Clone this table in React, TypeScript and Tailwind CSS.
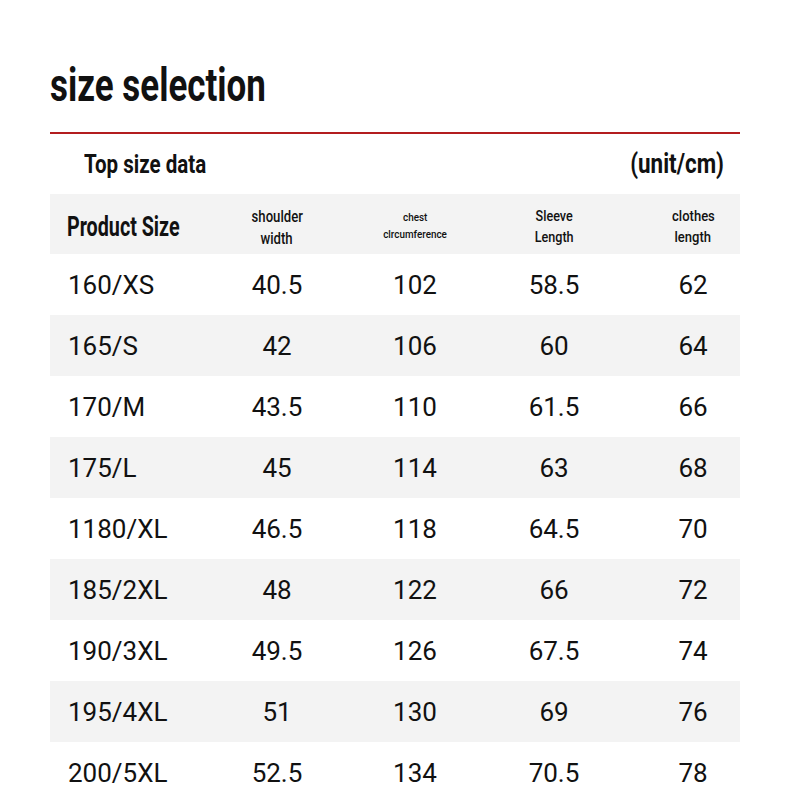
import React from "react";

const rows = [
  ["160/XS", "40.5", "102", "58.5", "62"],
  ["165/S", "42", "106", "60", "64"],
  ["170/M", "43.5", "110", "61.5", "66"],
  ["175/L", "45", "114", "63", "68"],
  ["1180/XL", "46.5", "118", "64.5", "70"],
  ["185/2XL", "48", "122", "66", "72"],
  ["190/3XL", "49.5", "126", "67.5", "74"],
  ["195/4XL", "51", "130", "69", "76"],
  ["200/5XL", "52.5", "134", "70.5", "78"],
];

const grid = "grid grid-cols-[158px_138px_138px_140px_116px]";

export default function App() {
  return (
    <div
      className="w-[790px] h-[799px] overflow-hidden bg-white text-[#111]"
      style={{ fontFamily: "Roboto, 'Liberation Sans', sans-serif" }}
    >
      <div className="px-[50px]">
        <div className="h-[132px] flex items-center pt-[38px]">
          <span className="inline-block origin-left scale-x-[0.76] text-[46px] font-bold leading-none whitespace-nowrap">
            size selection
          </span>
        </div>
        <div className="h-[2px] bg-[#b31d1f]" />
        <div className="h-[60px] flex items-center justify-between pl-[34px] pr-[16px]">
          <span className="inline-block origin-left scale-x-[0.79] text-[26px] font-bold leading-none whitespace-nowrap">
            Top size data
          </span>
          <span className="inline-block origin-right scale-x-[0.83] text-[27px] font-bold leading-none whitespace-nowrap">
            (unit/cm)
          </span>
        </div>
        <div className={`${grid} h-[60px] bg-[#f3f3f3] items-center`}>
          <div className="pl-[17px] pt-[8px]">
            <span className="inline-block origin-left scale-x-[0.73] text-[27px] font-bold leading-none whitespace-nowrap">
              Product Size
            </span>
          </div>
          <div className="flex flex-col items-center text-[16px] font-medium leading-[22px] pt-[8px]">
            <span className="inline-block scale-x-[0.82] whitespace-nowrap">shoulder</span>
            <span className="inline-block scale-x-[0.82] whitespace-nowrap">width</span>
          </div>
          <div className="flex flex-col items-center text-[11.5px] font-medium leading-[17px] pt-[4px]">
            <span className="inline-block scale-x-[0.86] whitespace-nowrap">chest</span>
            <span className="inline-block scale-x-[0.86] whitespace-nowrap">clrcumference</span>
          </div>
          <div className="flex flex-col items-center text-[15px] font-medium leading-[21px] pt-[6px]">
            <span className="inline-block scale-x-[0.84] whitespace-nowrap">Sleeve</span>
            <span className="inline-block scale-x-[0.84] whitespace-nowrap">Length</span>
          </div>
          <div className="flex flex-col items-center text-[15.5px] font-medium leading-[21px] pl-[22px] pt-[6px]">
            <span className="inline-block scale-x-[0.84] whitespace-nowrap">clothes</span>
            <span className="inline-block scale-x-[0.84] whitespace-nowrap">length</span>
          </div>
        </div>
        {rows.map((r, i) => (
          <div
            key={r[0]}
            className={`${grid} h-[61px] items-center text-[26px] leading-none ${
              i % 2 === 1 ? "bg-[#f3f3f3]" : "bg-white"
            }`}
          >
            <div className="pl-[18px] whitespace-nowrap">{r[0]}</div>
            <div className="text-center">{r[1]}</div>
            <div className="text-center">{r[2]}</div>
            <div className="text-center">{r[3]}</div>
            <div className="text-center pl-[22px]">{r[4]}</div>
          </div>
        ))}
      </div>
    </div>
  );
}
